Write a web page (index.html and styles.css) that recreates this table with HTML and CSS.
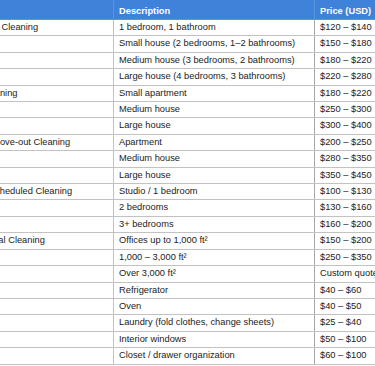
FILE: index.html
```html
<!DOCTYPE html>
<html lang="en">
<head>
<meta charset="utf-8">
<title>Cleaning Prices</title>
<link rel="stylesheet" href="styles.css">
</head>
<body>
<table class="price-table">
  <colgroup>
    <col class="col-service">
    <col class="col-desc">
    <col class="col-price">
  </colgroup>
  <thead>
    <tr><th>Service</th><th>Description</th><th>Price (USD)</th></tr>
  </thead>
  <tbody>
    <tr><td>Apartment Cleaning</td><td>1 bedroom, 1 bathroom</td><td>$120 – $140</td></tr>
    <tr><td></td><td>Small house (2 bedrooms, 1–2 bathrooms)</td><td>$150 – $180</td></tr>
    <tr><td></td><td>Medium house (3 bedrooms, 2 bathrooms)</td><td>$180 – $220</td></tr>
    <tr><td></td><td>Large house (4 bedrooms, 3 bathrooms)</td><td>$220 – $280</td></tr>
    <tr><td>Deep Cleaning</td><td>Small apartment</td><td>$180 – $220</td></tr>
    <tr><td></td><td>Medium house</td><td>$250 – $300</td></tr>
    <tr><td></td><td>Large house</td><td>$300 – $400</td></tr>
    <tr><td>Move-In/Move-out Cleaning</td><td>Apartment</td><td>$200 – $250</td></tr>
    <tr><td></td><td>Medium house</td><td>$280 – $350</td></tr>
    <tr><td></td><td>Large house</td><td>$350 – $450</td></tr>
    <tr><td>Weekly Scheduled Cleaning</td><td>Studio / 1 bedroom</td><td>$100 – $130</td></tr>
    <tr><td></td><td>2 bedrooms</td><td>$130 – $160</td></tr>
    <tr><td></td><td>3+ bedrooms</td><td>$160 – $200</td></tr>
    <tr><td>Commercial Cleaning</td><td>Offices up to 1,000 ft²</td><td>$150 – $200</td></tr>
    <tr><td></td><td>1,000 – 3,000 ft²</td><td>$250 – $350</td></tr>
    <tr><td></td><td>Over 3,000 ft²</td><td>Custom quote</td></tr>
    <tr><td>Add-ons</td><td>Refrigerator</td><td>$40 – $60</td></tr>
    <tr><td></td><td>Oven</td><td>$40 – $50</td></tr>
    <tr><td></td><td>Laundry (fold clothes, change sheets)</td><td>$25 – $40</td></tr>
    <tr><td></td><td>Interior windows</td><td>$50 – $100</td></tr>
    <tr><td></td><td>Closet / drawer organization</td><td>$60 – $100</td></tr>
  </tbody>
</table>
</body>
</html>
```
FILE: styles.css
```css
html, body {
  margin: 0;
  padding: 0;
  overflow: hidden;
  background: #ffffff;
}

.price-table {
  border-collapse: collapse;
  table-layout: fixed;
  width: 445px;
  margin: -3px 0 0 -50px;
  font-family: "Liberation Sans", Arial, sans-serif;
  font-size: 9.3px;
  color: #222222;
}

.col-service { width: 163px; }
.col-desc { width: 201px; }
.col-price { width: 81px; }

.price-table th {
  height: 22px;
  padding: 5px 5px 0;
  background: #3f82d9;
  color: #ffffff;
  font-weight: bold;
  text-align: left;
  border: 1px solid #5b93dc;
  white-space: nowrap;
  overflow: hidden;
  box-sizing: border-box;
}

.price-table td {
  height: 15.4px;
  line-height: 15.4px;
  padding: 0 5px;
  border: 1px solid #c2c2c2;
  white-space: nowrap;
  overflow: hidden;
  background: #ffffff;
}

.price-table td:nth-child(2) {
  border-left-color: #a6a6a6;
  border-right-color: #a6a6a6;
}
```
